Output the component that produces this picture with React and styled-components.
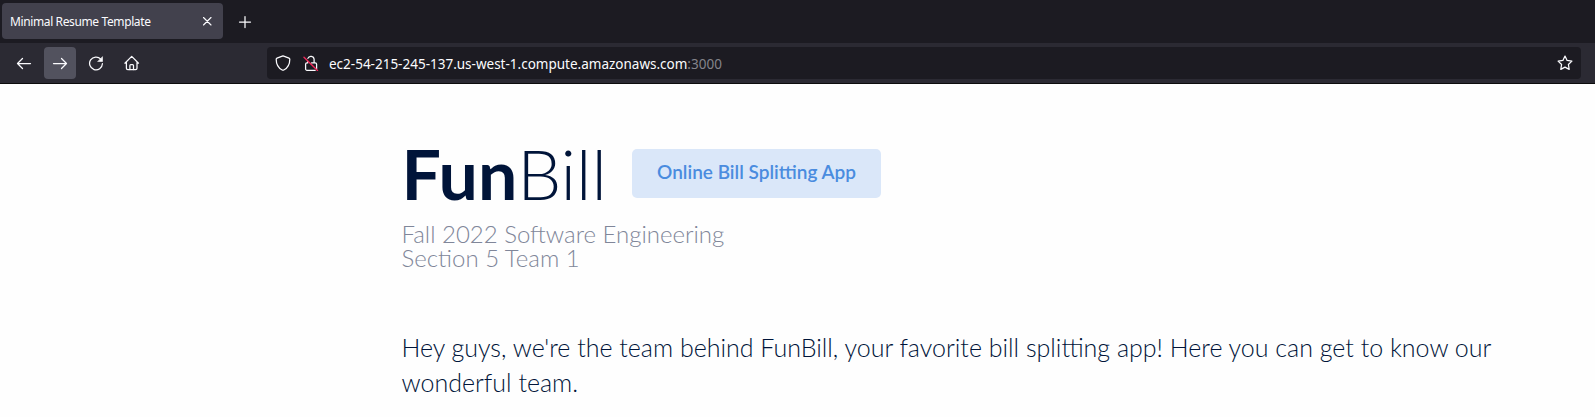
import React from "react";
import styled, { createGlobalStyle } from "styled-components";

const GlobalStyle = createGlobalStyle`
  * { box-sizing: border-box; }
  body { margin: 0; background: #fefefe; font-family: Lato, sans-serif; }
`;

const Window = styled.div`
  height: 417px;
  overflow: hidden;
  background: #fefefe;
`;

const TabBar = styled.div`
  display: flex;
  align-items: flex-start;
  height: 43px;
  padding: 3px 0 0 2px;
  background: #1c1b22;
`;

const Tab = styled.div`
  display: flex;
  align-items: center;
  justify-content: space-between;
  width: 221px;
  height: 36px;
  padding: 0 8px;
  border-radius: 4px;
  background: #42414d;
  color: #fbfbfe;
`;

const TabTitle = styled.span`
  padding-top: 2px;
  font: 12px/18px "Noto Sans", sans-serif;
  letter-spacing: -0.38px;
  white-space: nowrap;
`;

const NewTab = styled.div`
  display: flex;
  align-items: center;
  justify-content: center;
  width: 36px;
  height: 36px;
  margin-left: 4px;
  padding-top: 1px;
`;

const Toolbar = styled.div`
  display: flex;
  align-items: flex-start;
  height: 41px;
  padding: 4px 14px 0 8px;
  background: #2b2a33;
  border-bottom: 1px solid #0c0c0d;
`;

const NavButtons = styled.div`
  display: flex;
  gap: 4px;
  width: 259px;
`;

const NavButton = styled.div`
  display: flex;
  align-items: center;
  justify-content: center;
  width: 32px;
  height: 32px;
  border-radius: 4px;
  background: ${(p) => (p.$active ? "#52525e" : "transparent")};
`;

const AddressBar = styled.div`
  display: flex;
  align-items: center;
  flex: 1;
  height: 32px;
  padding: 0 8px;
  border-radius: 4px;
  background: #1c1b22;
`;

const Url = styled.div`
  flex: 1;
  margin-left: 10px;
  padding-top: 2px;
  font: 13.5px/20px "Noto Sans", sans-serif;
  color: #fbfbfe;
  white-space: nowrap;
`;

const Port = styled.span`
  color: #84848b;
`;

const Icon = styled.svg`
  display: block;
  flex: none;
  width: 16px;
  height: 16px;
  margin-left: ${(p) => p.$left || 0}px;
  fill: none;
  stroke: #fbfbfe;
  stroke-width: ${(p) => p.$weight || 1.25};
  stroke-linecap: round;
  stroke-linejoin: round;
`;

const Page = styled.main`
  padding: 52px 0 0 401.5px;
`;

const Header = styled.header`
  display: flex;
  align-items: flex-start;
`;

const Title = styled.h1`
  width: 230.5px;
  margin: 0;
  font-size: 69.8px;
  line-height: 74px;
  font-weight: 300;
  color: #001439;
  white-space: nowrap;
`;

const Strong = styled.span`
  font-weight: 700;
`;

const Badge = styled.div`
  width: 249px;
  height: 49px;
  margin-top: 13px;
  border-radius: 5px;
  background: #dae7f9;
  color: #4a8cdf;
  font-size: 19px;
  line-height: 46px;
  font-weight: 600;
  text-align: center;
  white-space: nowrap;
`;

const Subtitle = styled.p`
  margin: 12px 0 0;
  font-size: 24px;
  line-height: 24px;
  font-weight: 300;
  color: #808699;
`;

const Intro = styled.p`
  margin: 60px 0 0;
  font-size: 25px;
  line-height: 35px;
  font-weight: 300;
  color: #001439;
  white-space: nowrap;
`;

export default function App() {
  return (
    <Window>
      <GlobalStyle />
      <TabBar>
        <Tab>
          <TabTitle>Minimal Resume Template</TabTitle>
          <Icon viewBox="0 0 16 16" $weight={1.15}><path d="M4.500 4.500l7.500 7.500M12 4.500l-7.500 7.500" /></Icon>
        </Tab>
        <NewTab>
          <Icon viewBox="0 0 16 16"><path d="M8 2.5v11M2.5 8h11" /></Icon>
        </NewTab>
      </TabBar>
      <Toolbar>
        <NavButtons>
          <NavButton>
            <Icon viewBox="0 0 16 16"><path d="M14.5 8.5h-13M6.5 3.5l-5 5 5 5" /></Icon>
          </NavButton>
          <NavButton $active>
            <Icon viewBox="0 0 16 16"><path d="M1.5 8.5h13M9.5 3.5l5 5-5 5" /></Icon>
          </NavButton>
          <NavButton>
            <Icon viewBox="0 0 16 16">
              <path d="M12.8 4.2A6.4 6.4 0 1 0 14.4 8.7" />
              <path d="M14.5 2v4.5H10z" fill="#fbfbfe" strokeWidth="0.6" />
            </Icon>
          </NavButton>
          <NavButton>
            <Icon viewBox="0 0 16 16">
              <path d="M0.900 8.2L7.700 1.4l6.8 6.8M2.400 7v6.3c0 .8.6 1.4 1.4 1.4h7.800c.8 0 1.4-.6 1.4-1.4V7" />
              <path d="M5.900 14.500V10.400c0-.5.4-.9.9-.9h1.800c.5 0 .9.4.9.9v4.100" />
            </Icon>
          </NavButton>
        </NavButtons>
        <AddressBar>
          <Icon viewBox="0 0 16 16">
            <path d="M8 .9l6 2.3c.5.2.8.5.8 1 0 5-2 8.700-6 10.800-.5.3-1.100.3-1.600 0-4-2.100-6-5.800-6-10.800 0-.5.3-.8.8-1z" />
          </Icon>
          <Icon viewBox="0 0 16 16" $left={12}>
            <path d="M4.900 3.400a3.200 3.200 0 0 1 6.200.9V7.900M8.500 7.900h3.700c.8 0 1.400.6 1.400 1.400v4.600M12.200 15.300H4c-.8 0-1.400-.6-1.400-1.400V9.300c0-.8.6-1.400 1.400-1.400h.7V6.500" />
            <path d="M1 2.300l13.500 13.200" stroke="#f0295a" strokeWidth="1.400" />
          </Icon>
          <Url>ec2-54-215-245-137.us-west-1.compute.amazonaws.com<Port>:3000</Port></Url>
          <Icon viewBox="0 0 16 16">
            <path d="M8 1.100l2.100 4.300 4.800.7-3.500 3.400.8 4.900L8 12.100l-4.200 2.300.8-4.900L1.100 6.100l4.800-.7z" />
          </Icon>
        </AddressBar>
      </Toolbar>
      <Page>
        <Header>
          <Title><Strong>Fun</Strong>Bill</Title>
          <Badge>Online Bill Splitting App</Badge>
        </Header>
        <Subtitle>Fall 2022 Software Engineering<br />Section 5 Team 1</Subtitle>
        <Intro>
          Hey guys, we're the team behind FunBill, your favorite bill splitting app! Here you can get to know our<br />
          wonderful team.
        </Intro>
      </Page>
    </Window>
  );
}
